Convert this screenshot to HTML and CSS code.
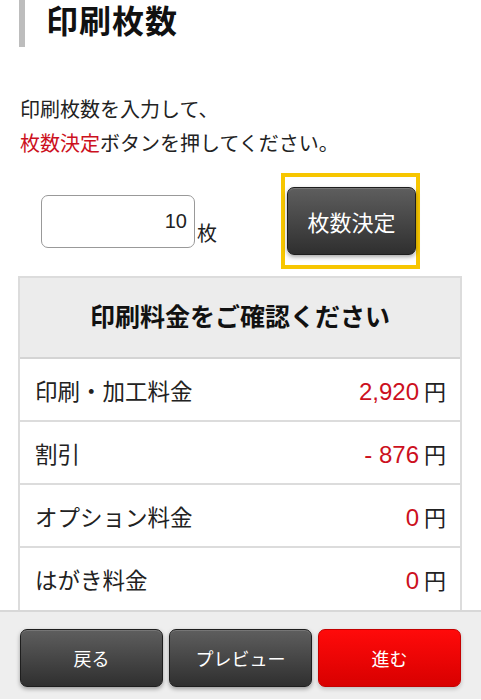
FILE: index.html
```html
<!DOCTYPE html>
<html lang="ja">
<head>
<meta charset="utf-8">
<title>印刷枚数</title>
<link rel="stylesheet" href="styles.css">
</head>
<body>
<div class="page">
  <h1 class="title">印刷枚数</h1>
  <p class="lead">印刷枚数を入力して、<br><span class="red">枚数決定</span>ボタンを押してください。</p>
  <div class="qty">
    <div class="qty-input">
      <div class="input">10</div>
      <span class="unit">枚</span>
    </div>
    <div class="highlight">
      <button class="btn dark decide">枚数決定</button>
    </div>
  </div>
  <div class="price">
    <div class="price-head">印刷料金をご確認ください</div>
    <div class="price-row"><span class="label">印刷・加工料金</span><span class="value"><span class="num">2,920</span><span class="yen">円</span></span></div>
    <div class="price-row"><span class="label">割引</span><span class="value"><span class="num">- 876</span><span class="yen">円</span></span></div>
    <div class="price-row"><span class="label">オプション料金</span><span class="value"><span class="num">0</span><span class="yen">円</span></span></div>
    <div class="price-row"><span class="label">はがき料金</span><span class="value"><span class="num">0</span><span class="yen">円</span></span></div>
  </div>
  <div class="footer">
    <button class="btn dark nav">戻る</button>
    <button class="btn dark nav">プレビュー</button>
    <button class="btn red-btn nav">進む</button>
  </div>
</div>
</body>
</html>
```
FILE: styles.css
```css
* { box-sizing: border-box; }
html, body { margin: 0; padding: 0; background: #fff; }
body {
  font-family: "Liberation Sans", "Noto Sans CJK JP", sans-serif;
  color: #222;
  width: 481px;
  height: 700px;
  overflow: hidden;
}
.page { display: flex; flex-direction: column; }
.title {
  margin: 0 0 0 19px;
  height: 47px;
  border-left: 6px solid #bdbdbd;
  padding-left: 21px;
  font-size: 32px;
  line-height: 44px;
  font-weight: bold;
  color: #111;
  letter-spacing: 1px;
}
.lead {
  margin: 46px 0 0 20px;
  font-size: 20px;
  line-height: 34px;
  color: #222;
}
.red { color: #cc1020; }
.qty {
  display: flex;
  align-items: center;
  margin-top: 12px;
  padding-left: 41px;
}
.qty-input { display: flex; align-items: flex-end; width: 240px; }
.input {
  width: 154px;
  height: 53px;
  border: 1px solid #999;
  border-radius: 7px;
  text-align: right;
  padding-right: 7px;
  font-size: 20px;
  line-height: 51px;
  color: #222;
}
.unit { font-size: 20px; line-height: 24px; margin-left: 2px; margin-bottom: 2px; }
.highlight {
  border: 4px solid #f7c600;
  padding: 10px 0 10px 2px;
  width: 139px;
  height: 96px;
}
.btn {
  font-family: "Liberation Sans", "Noto Sans CJK JP", sans-serif;
  color: #fff;
  border-radius: 7px;
  cursor: pointer;
  padding: 0;
}
.dark {
  background: linear-gradient(#5e5e5e, #2f2f2f);
  border: 1px solid #1e1e1e;
  box-shadow: 0 2px 4px rgba(0,0,0,0.35), inset 0 1px 0 rgba(255,255,255,0.15);
}
.decide {
  width: 129px;
  height: 68px;
  font-size: 22px;
}
.price {
  margin: 7px 0 0 18px;
  width: 444px;
  border: 2px solid #dcdcdc;
  border-bottom: none;
}
.price-head {
  height: 81px;
  background: #ececec;
  border-bottom: 2px solid #d4d4d4;
  text-align: center;
  font-size: 25px;
  font-weight: bold;
  line-height: 78px;
  color: #111;
}
.price-row {
  display: flex;
  justify-content: space-between;
  align-items: center;
  height: 63px;
  border-bottom: 2px solid #dcdcdc;
  padding: 0 14px 0 15px;
  font-size: 22.5px;
}
.price-row:last-child { border-bottom: none; height: 62px; }
.label { color: #222; }
.value { display: flex; align-items: baseline; }
.num { color: #cc1020; font-size: 24px; }
.yen { margin-left: 5px; color: #222; font-size: 22px; }
.footer {
  height: 89px;
  background: #eeeeee;
  border-top: 2px solid #d8d8d8;
  display: flex;
  gap: 6px;
  padding: 17px 20px 0;
}
.nav {
  flex: 1;
  height: 58px;
  font-size: 18px;
}
.red-btn {
  background: linear-gradient(#ff0a0a, #d80000);
  border: 1px solid #c40000;
  box-shadow: 0 2px 4px rgba(0,0,0,0.2);
}
```
